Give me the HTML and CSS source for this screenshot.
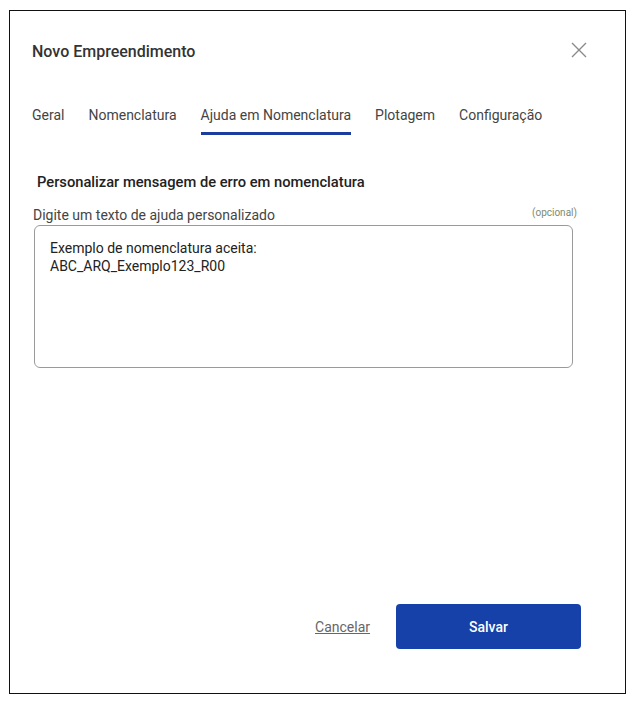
FILE: index.html
```html
<!DOCTYPE html>
<html lang="pt">
<head>
<meta charset="utf-8">
<link rel="stylesheet" href="styles.css">
</head>
<body>
<div class="dialog">
  <div class="header">
    <div class="title">Novo Empreendimento</div>
    <svg class="close" width="16" height="16" viewBox="0 0 16 16"><path d="M1 1 L15 15 M15 1 L1 15" stroke="#8a8a8a" stroke-width="1.4" fill="none"/></svg>
  </div>
  <div class="tabs">
    <div class="tab">Geral</div>
    <div class="tab">Nomenclatura</div>
    <div class="tab active">Ajuda em Nomenclatura</div>
    <div class="tab">Plotagem</div>
    <div class="tab">Configuração</div>
  </div>
  <div class="section-title">Personalizar mensagem de erro em nomenclatura</div>
  <div class="label-row">
    <span class="label">Digite um texto de ajuda personalizado</span>
    <span class="optional">(opcional)</span>
  </div>
  <div class="textarea">Exemplo de nomenclatura aceita:<br>ABC_ARQ_Exemplo123_R00</div>
  <div class="footer">
    <a class="cancel">Cancelar</a>
    <button class="save">Salvar</button>
  </div>
</div>
</body>
</html>
```
FILE: styles.css
```css
html, body {
  margin: 0;
  padding: 0;
  background: #fff;
}
body {
  padding: 10px 0 0 9px;
  font-family: Roboto, "Liberation Sans", Arial, sans-serif;
}
.dialog {
  box-sizing: border-box;
  width: 617px;
  height: 684px;
  border: 1px solid #111;
  display: flex;
  flex-direction: column;
  padding: 0 0 0 22px;
}
.header {
  display: flex;
  align-items: center;
  justify-content: space-between;
  padding: 31px 38px 0 0;
  height: 20px;
  box-sizing: content-box;
}
.title {
  font-size: 16px;
  font-weight: 500;
  color: #333;
  line-height: 20px;
}
.close {
  margin-top: -5px;
}
.tabs {
  display: flex;
  gap: 24px;
  margin-top: 43px;
}
.tab {
  font-size: 14px;
  color: #444;
  line-height: 20px;
  padding-bottom: 7px;
  border-bottom: 3px solid transparent;
}
.tab.active {
  border-bottom-color: #1a3d9e;
}
.section-title {
  margin-top: 37px;
  margin-left: 5px;
  font-size: 14.7px;
  font-weight: 500;
  color: #222;
  line-height: 20px;
}
.label-row {
  display: flex;
  justify-content: space-between;
  align-items: center;
  margin-top: 13px;
  margin-left: 1px;
  width: 544px;
  line-height: 20px;
}
.label {
  font-size: 14px;
  color: #444;
}
.optional {
  font-size: 10px;
  color: #7d8a72;
  margin-top: -4px;
}
.textarea {
  box-sizing: border-box;
  margin-left: 2px;
  width: 539px;
  height: 143px;
  border: 1px solid #9a9a9a;
  border-radius: 6px;
  padding: 13px 15px;
  font-size: 14px;
  line-height: 18px;
  color: #222;
}
.footer {
  margin-top: auto;
  display: flex;
  justify-content: flex-end;
  align-items: center;
  gap: 26px;
  padding: 0 44px 44px 0;
}
.cancel {
  font-size: 14px;
  color: #666;
  text-decoration: underline;
}
.save {
  width: 185px;
  height: 45px;
  border: none;
  border-radius: 4px;
  background: #1541a8;
  color: #fff;
  font-family: Roboto, "Liberation Sans", Arial, sans-serif;
  font-size: 14px;
  font-weight: 500;
}
```
